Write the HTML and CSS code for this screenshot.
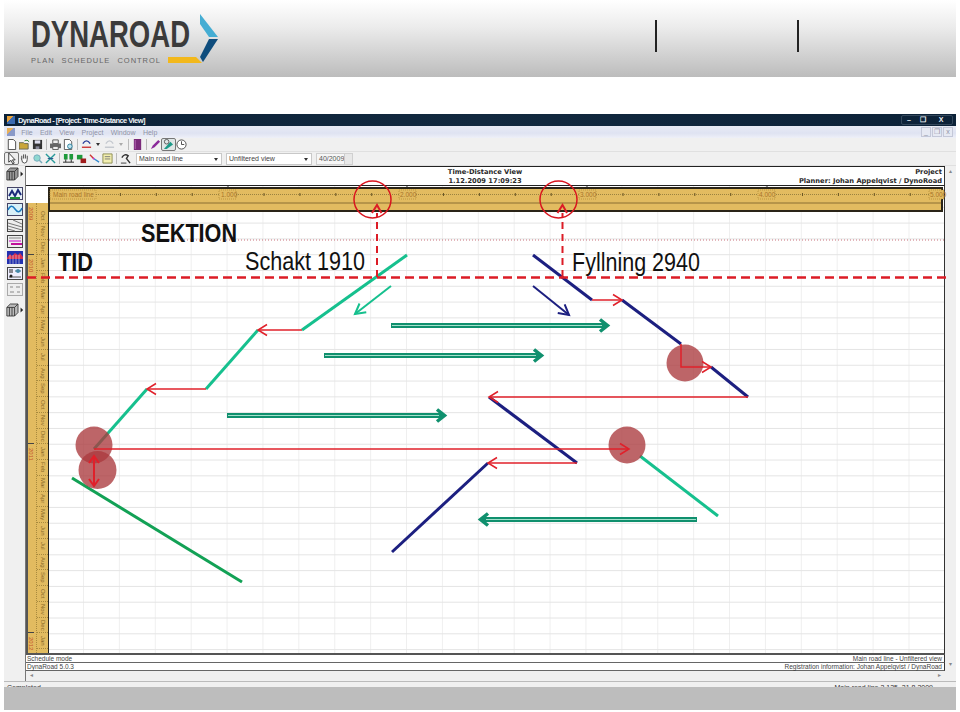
FILE: index.html
```html
<!DOCTYPE html>
<html lang="en">
<head>
  <meta charset="UTF-8">
  <meta name="viewport" content="width=device-width, initial-scale=1.0">
  <title>DynaRoad</title>
  <link rel="stylesheet" href="styles.css">
</head>
<body>

  <header class="banner">
    <svg class="logo" width="216" height="56" viewBox="0 0 216 56">
      <text class="logo-name" x="0" y="34" textLength="159" lengthAdjust="spacingAndGlyphs">DYNAROAD</text>
      <text class="logo-tag" x="0" y="50" textLength="129">PLAN SCHEDULE CONTROL</text>
      <path d="M137 44H165L171 50H137Z" fill="#f2b81c"/>
      <path d="M169 1L187 24H178L169 11Z" fill="#45add3"/>
      <path d="M178 26H187L172 49L169 44Z" fill="#0f4d7d"/>
    </svg>
    <div class="banner-links">
      <span class="banner-sep"></span>
      <span class="banner-sep"></span>
    </div>
  </header>

  <section class="app">
    <div class="titlebar">
      <span class="app-icon"></span>
      <span>DynaRoad - [Project: Time-Distance View]</span>
      <div class="win-buttons">
        <span>&#8211;</span><span>&#10064;</span><span class="win-close">X</span>
      </div>
    </div>

    <div class="menubar">
      <span class="app-icon small"></span>
      <span>File</span><span>Edit</span><span>View</span><span>Project</span><span>Window</span><span>Help</span>
      <div class="mdi-buttons">
        <span>_</span><span>&#10064;</span><span>x</span>
      </div>
    </div>

    <div class="toolbar">
      <svg class="tb" viewBox="0 0 12 12"><path d="M2.5 .5H8L10.5 3V11.5H2.5Z" fill="#fff" stroke="#444"/></svg>
      <svg class="tb" viewBox="0 0 12 12"><path d="M0 4H5L6 5H10V11H0Z" fill="#c9a63a" stroke="#665"/><path d="M6 2Q9 0 11 3" fill="none" stroke="#2a7a2a"/></svg>
      <svg class="tb" viewBox="0 0 12 12"><path d="M1 1H11V11H1Z" fill="#333"/><path d="M3 1.5H9V5H3Z" fill="#dde"/><path d="M4 8H8V11H4Z" fill="#889"/></svg>
      <span class="tb-sep"></span>
      <svg class="tb" viewBox="0 0 12 12"><path d="M3 1H9V5H3Z" fill="#eee" stroke="#555"/><path d="M0 5H12V10H0Z" fill="#666"/><path d="M3 8H9V11.5H3Z" fill="#eee" stroke="#555"/></svg>
      <svg class="tb" viewBox="0 0 12 12"><path d="M1.500 .5H7L9.500 3V11.500H1.500Z" fill="#fff" stroke="#555"/><circle cx="7.500" cy="8" r="2.500" fill="#bfe3ef" stroke="#2a7f9a"/></svg>
      <span class="tb-sep"></span>
      <svg class="tb" viewBox="0 0 12 12"><path d="M2 5Q6 -1 10 5" fill="none" stroke="#2b3e9a" stroke-width="1.500"/><path d="M1 9H11" stroke="#c33" stroke-width="1.500"/></svg>
      <span class="tb-drop"></span>
      <svg class="tb" viewBox="0 0 12 12"><path d="M2 5Q6 -1 10 5M1 9H11" fill="none" stroke="#c5c9cf" stroke-width="1.500"/></svg>
      <span class="tb-drop off"></span>
      <span class="tb-sep"></span>
      <svg class="tb" viewBox="0 0 12 12"><path d="M2 0H10V12H2Z" fill="#7a2a7a"/><path d="M3 1H4V11H3Z" fill="#b56ab5"/></svg>
      <span class="tb-sep"></span>
      <svg class="tb" viewBox="0 0 12 12"><path d="M1 11L3 7L9 1L11 3L5 9Z" fill="#8a2a9a"/></svg>
      <span class="tb-active"><svg class="tb" viewBox="0 0 12 12"><path d="M1 11L8 3L11 6L4 11Z" fill="#1c9a88"/><circle cx="4" cy="3" r="2.500" fill="none" stroke="#555"/></svg></span>
      <svg class="tb" viewBox="0 0 12 12"><circle cx="6" cy="6" r="5" fill="#fff" stroke="#444"/><path d="M6 2.500V6H9" fill="none" stroke="#444"/></svg>
    </div>

    <div class="toolbar second">
      <span class="tb-active plain"><svg class="tb" viewBox="0 0 12 12"><path d="M3 0V10L5.500 8L7.500 12L9 11L7 7.500H10Z" fill="#fff" stroke="#333"/></svg></span>
      <svg class="tb" viewBox="0 0 12 12"><path d="M3 7V3M5 6V1.500M7 6V1.500M9 7V3M3 7L2 6M3 7Q3 11 6 11Q9 11 9 7" fill="#fff" stroke="#444"/></svg>
      <svg class="tb" viewBox="0 0 12 12"><circle cx="5.500" cy="5.500" r="3.500" fill="#8fd8d0" stroke="#7ab"/><path d="M8 8L11 11" stroke="#7ab" stroke-width="1.500"/></svg>
      <svg class="tb" viewBox="0 0 12 12"><path d="M1 1L11 11M11 1L1 11" stroke="#2a9a9a" stroke-width="1.500"/><path d="M3 6H9" stroke="#26488a"/></svg>
      <span class="tb-sep"></span>
      <svg class="tb" viewBox="0 0 12 12"><path d="M1 1H5V7H1ZM7 1H11V7H7Z" fill="#1e9a3a"/><path d="M0 10H12M3 7V10M9 7V10" stroke="#222"/></svg>
      <svg class="tb" viewBox="0 0 12 12"><path d="M1 2H7V7H1Z" fill="#1e9a3a"/><path d="M5 6H11V11H5Z" fill="#a01c1c"/></svg>
      <svg class="tb" viewBox="0 0 12 12"><path d="M1 2L5 6" stroke="#c33" stroke-width="1.500"/><path d="M5 6L11 10" stroke="#38c" stroke-width="1.500"/><circle cx="5" cy="6" r="1" fill="#c3c"/></svg>
      <svg class="tb" viewBox="0 0 12 12"><path d="M1 1H11V11H1Z" fill="#f3efb0" stroke="#8a8a50"/><path d="M3 4H9M3 6.500H9" stroke="#777"/></svg>
      <span class="tb-sep"></span>
      <svg class="tb" viewBox="0 0 12 12"><path d="M2 5Q5 0 9 3L7 6L11 11" fill="none" stroke="#333" stroke-width="1.500"/><path d="M1 11H7" stroke="#333"/></svg>
      <div class="combo">Main road line<span class="combo-arrow"></span></div>
      <div class="combo">Unfiltered view<span class="combo-arrow"></span></div>
      <div class="spinner">40/2009<span class="spin-btn"></span></div>
    </div>

    <div class="workspace">
      <aside class="sidebar">
        <svg class="side-icon cube" viewBox="0 0 21 16"><path d="M1 5L5 1H14V11L10 15H1Z" fill="#999" stroke="#333"/><path d="M1 5H10V15M10 5L14 1M4 5V15M7 5V15" fill="none" stroke="#333"/><path d="M17 5L20 8L17 11Z" fill="#222"/></svg>
        <svg class="side-icon" viewBox="0 0 16 13"><rect x=".5" y=".5" width="15" height="12" fill="#e8f2f8" stroke="#446"/><path d="M2 9L5 4L8 9L11 3L14 8" fill="none" stroke="#1a2a7a" stroke-width="2"/><path d="M3 11H13" stroke="#1a8a3a" stroke-width="2"/></svg>
        <svg class="side-icon" viewBox="0 0 16 13"><rect x=".5" y=".5" width="15" height="12" fill="#d8f0f8" stroke="#446"/><path d="M1 7Q4 0 8 6T15 5" fill="none" stroke="#1a7ac0" stroke-width="1.500"/></svg>
        <svg class="side-icon" viewBox="0 0 16 13"><rect x=".5" y=".5" width="15" height="12" fill="#eee" stroke="#444"/><path d="M1 4L15 8M1 7L15 11M1 10L8 12M6 1L15 5" stroke="#777"/></svg>
        <svg class="side-icon" viewBox="0 0 16 13"><rect x=".5" y=".5" width="15" height="12" fill="#eee" stroke="#444"/><path d="M2 3H14" stroke="#888"/><path d="M2 6H14" stroke="#c0c"/><path d="M4 9H15" stroke="#c0109a" stroke-width="2"/></svg>
        <svg class="side-icon" viewBox="0 0 16 13"><rect width="16" height="13" fill="#2230b0"/><path d="M0 7L3 3L5 5L8 2L11 4L13 2L16 6V8H0Z" fill="#d83050"/><path d="M3 4V13M6 4V13M9 4V13M12 4V13" stroke="#ddd" stroke-width=".6"/></svg>
        <svg class="side-icon" viewBox="0 0 16 13"><rect x=".5" y=".5" width="15" height="12" fill="#eef" stroke="#444"/><path d="M3 2V6M5 2V6" stroke="#222"/><path d="M8 4H14" stroke="#267"/><circle cx="11" cy="4" r="2" fill="#48a"/><path d="M2 10H14" stroke="#555"/><circle cx="4" cy="9" r="1.500" fill="#222"/></svg>
        <svg class="side-icon" viewBox="0 0 16 13"><rect x=".5" y=".5" width="15" height="12" fill="#eee" stroke="#aaa"/><path d="M3 3H6V5H3ZM9 3H13V5H9ZM3 8H7V10H3ZM10 8H13V10H10Z" fill="#bbb"/></svg>
        <svg class="side-icon cube last" viewBox="0 0 21 16"><path d="M1 5L5 1H14V11L10 15H1Z" fill="#bbb" stroke="#333"/><path d="M1 5H10V15M10 5L14 1M4 5V15M7 5V15" fill="none" stroke="#333"/><path d="M17 5L20 8L17 11Z" fill="#222"/></svg>
      </aside>

      <div class="view">
        <div class="view-head">
          <div class="view-title">Time-Distance View<br>1.12.2009 17:09:23</div>
          <div class="view-project">Project<br>Planner: Johan Appelqvist / DynoRoad</div>
        </div>

        <div class="chart">
          <div class="left-ruler">
            <div class="years">
              <span class="y-part">2009</span>
              <span class="y-full">2010</span>
              <span class="y-full">2011</span>
              <span class="y-last">2012</span>
            </div>
            <div class="months">
              <span>Oct</span><span>Nov</span><span>Dec</span>
              <span>Jan</span><span>Feb</span><span>Mar</span><span>Apr</span><span>May</span><span>Jun</span>
              <span>Jul</span><span>Aug</span><span>Sep</span><span>Oct</span><span>Nov</span><span>Dec</span>
              <span>Jan</span><span>Feb</span><span>Mar</span><span>Apr</span><span>May</span><span>Jun</span>
              <span>Jul</span><span>Aug</span><span>Sep</span><span>Oct</span><span>Nov</span><span>Dec</span>
              <span>Jan</span>
            </div>
          </div>
          <div class="grid"></div>
        </div>

        <div class="status-row"><span>Schedule mode</span><span>Main road line - Unfiltered view</span></div>
        <div class="status-row"><span>DynaRoad 5.0.3</span><span>Registration information: Johan Appelqvist / DynaRoad</span></div>
        <div class="hscroll"><span>&#9666;</span><span>&#9656;</span></div>
      </div>

      <div class="vscroll"><span>&#9652;</span><span>&#9662;</span></div>
    </div>

    <div class="statusbar"><span>Completed</span><span>Main road line 2.125, 31.8.2009</span></div>

    <!-- page coordinates, the diagram is drawn on top of the chart -->
    <svg class="overlay" width="952" height="573" viewBox="4 114 952 573">
      <defs>
        <marker id="redHead" markerUnits="userSpaceOnUse" markerWidth="14" markerHeight="14" refX="11" refY="7" orient="auto">
          <path d="M2 1.500L11 7L2 12.500" fill="none" stroke="#e0202a" stroke-width="1.500"/>
        </marker>
        <marker id="tealHead" markerUnits="userSpaceOnUse" markerWidth="16" markerHeight="16" refX="12" refY="8" orient="auto">
          <path d="M2 2.500L12 8L2 13.500" fill="none" stroke="#16c08e" stroke-width="2"/>
        </marker>
        <marker id="blueHead" markerUnits="userSpaceOnUse" markerWidth="16" markerHeight="16" refX="12" refY="8" orient="auto">
          <path d="M2 2.500L12 8L2 13.500" fill="none" stroke="#1c1f80" stroke-width="2"/>
        </marker>
      </defs>

      <!-- top ruler -->
      <path class="ruler-tick" d="M228 186V188M407 186V188M587 186V188M767 186V188"/>
      <rect class="band" x="49" y="188" width="893" height="23"/>
      <line class="band-dots" x1="50" y1="194.500" x2="941" y2="194.500"/>
      <line class="band-ticks" x1="84" y1="194.500" x2="941" y2="194.500"/>
      <line class="band-line" x1="50" y1="203" x2="941" y2="203"/>
      <rect class="band-box" x="50" y="190" width="46" height="9"/>
      <text class="band-text" x="53" y="197">Main road line</text>
      <rect class="band-box" x="219" y="190" width="17" height="9"/>
      <text class="band-text" x="221" y="197">1.000</text>
      <rect class="band-box" x="399" y="190" width="17" height="9"/>
      <text class="band-text" x="400" y="197">2.000</text>
      <rect class="band-box" x="579" y="190" width="17" height="9"/>
      <text class="band-text" x="580" y="197">3.000</text>
      <rect class="band-box" x="758" y="190" width="17" height="9"/>
      <text class="band-text" x="759" y="197">4.000</text>
      <rect class="band-box" x="929" y="190" width="15" height="9"/>
      <text class="band-text" x="930" y="197">5.000</text>

      <line class="dotted" x1="49" y1="240" x2="945" y2="240"/>

      <!-- tasks -->
      <g class="task teal">
        <line x1="407" y1="255" x2="302" y2="330"/>
        <line x1="258" y1="330" x2="206" y2="389"/>
        <line x1="147" y1="389" x2="94" y2="449"/>
        <line x1="640" y1="456" x2="718" y2="516"/>
      </g>
      <g class="task blue">
        <line x1="533" y1="255" x2="592" y2="300"/>
        <line x1="622" y1="300" x2="681" y2="344"/>
        <line x1="711" y1="367" x2="748" y2="397"/>
        <line x1="489" y1="397" x2="577" y2="463"/>
        <line x1="488" y1="463" x2="392" y2="552"/>
      </g>
      <line class="task green" x1="72" y1="478" x2="242" y2="582"/>

      <line class="thin teal-thin" x1="391" y1="286" x2="355" y2="314" marker-end="url(#tealHead)"/>
      <line class="thin blue-thin" x1="533" y1="286" x2="569" y2="315" marker-end="url(#blueHead)"/>

      <!-- double arrows -->
      <g class="haul">
        <path d="M391 325.500H606"/><path d="M324 355.500H540"/><path d="M227 415.500H443"/><path d="M697 519.500H482"/>
      </g>
      <g class="haul-core">
        <path d="M392 325.500H602"/><path d="M325 355.500H536"/><path d="M228 415.500H439"/><path d="M696 519.500H486"/>
      </g>
      <g class="haul-head">
        <path d="M600 319.500L607.500 325.500L600 331.500"/>
        <path d="M534 349.500L541.500 355.500L534 361.500"/>
        <path d="M437 409.500L444.500 415.500L437 421.500"/>
        <path d="M488 513.500L480.500 519.500L488 525.500"/>
      </g>

      <!-- links -->
      <g class="link">
        <line x1="302" y1="330" x2="258" y2="330" marker-end="url(#redHead)"/>
        <line x1="206" y1="389" x2="147" y2="389" marker-end="url(#redHead)"/>
        <line x1="592" y1="300" x2="622" y2="300" marker-end="url(#redHead)"/>
        <line x1="748" y1="397" x2="489" y2="397" marker-end="url(#redHead)"/>
        <line x1="577" y1="463" x2="488" y2="463" marker-end="url(#redHead)"/>
      </g>

      <circle class="mark" cx="94" cy="445" r="18.500"/>
      <circle class="mark" cx="97.500" cy="470" r="19"/>
      <circle class="mark" cx="627" cy="445" r="18.500"/>
      <circle class="mark" cx="685" cy="363" r="18.500"/>

      <g class="link">
        <line x1="94" y1="449" x2="629" y2="449" marker-end="url(#redHead)"/>
        <polyline points="681,344 681,367 711,367" marker-end="url(#redHead)"/>
      </g>
      <path class="link-bold" d="M94 457V485M89 463L94 456L99 463M89 479L94 486L99 479"/>

      <!-- section markers -->
      <circle class="ring" cx="372.500" cy="199.500" r="18.500"/>
      <circle class="ring" cx="558.500" cy="199.500" r="18.500"/>
      <line class="dash-h" x1="27" y1="277.500" x2="951" y2="277.500"/>
      <line class="dash-v" x1="377" y1="277" x2="377" y2="213"/>
      <line class="dash-v" x1="562.500" y1="277" x2="562.500" y2="213"/>
      <path class="dash-head" d="M372 213L377 205L381.500 213"/>
      <path class="dash-head" d="M557.500 213L562.500 205L567 213"/>

      <text class="note bold" x="141" y="242" textLength="96" lengthAdjust="spacingAndGlyphs">SEKTION</text>
      <text class="note bold" x="58" y="271" textLength="35" lengthAdjust="spacingAndGlyphs">TID</text>
      <text class="note" x="245" y="270" textLength="120" lengthAdjust="spacingAndGlyphs">Schakt 1910</text>
      <text class="note" x="572" y="271" textLength="128" lengthAdjust="spacingAndGlyphs">Fyllning 2940</text>
    </svg>
  </section>

  <div class="bottom-band"></div>

</body>
</html>
```

FILE: styles.css
```css
* {
  box-sizing: border-box;
}
body {
  margin: 0;
  width: 960px;
  height: 712px;
  overflow: hidden;
  background-color: #fff;
  font-family: "Liberation Sans", Arial, sans-serif;
}

/* banner */
.banner {
  display: flex;
  align-items: flex-start;
  margin: 0 4px;
  height: 77px;
  padding: 13px 0 0 27px;
  background: linear-gradient(#fff 0%, #ececec 35%, #bcbcbc 100%);
}
.logo {
  display: block;
}
.logo-name {
  font-family: "Liberation Sans Narrow", "Liberation Sans", sans-serif;
  font-weight: 700;
  font-size: 37px;
  fill: #3b3b3b;
}
.logo-tag {
  font-size: 7.500px;
  word-spacing: 4px;
  fill: #666;
}
.banner-links {
  display: flex;
  gap: 140px;
  margin: 7px 0 0 408px;
}
.banner-sep {
  width: 2px;
  height: 32px;
  background-color: #222;
}

/* application window */
.app {
  position: relative;
  width: 952px;
  height: 573px;
  margin: 37px 4px 0;
  background-color: #f0f0f0;
  font-size: 7px;
  color: #333;
}
.overlay {
  position: absolute;
  left: 0;
  top: 0;
  pointer-events: none;
}
.titlebar {
  display: flex;
  align-items: center;
  gap: 3px;
  height: 12px;
  padding-left: 3px;
  background: linear-gradient(90deg, #0c2238, #12293f 50%, #0c2238);
  color: #eef2f6;
  font-size: 7.500px;
  font-weight: 700;
  letter-spacing: -.550px;
}
.app-icon {
  width: 8px;
  height: 8px;
  background: linear-gradient(135deg, #e8a23a 40%, #3a6ab0 40%);
}
.app-icon.small {
  margin: 0 -1px 0 3px;
  background: linear-gradient(135deg, #e8b05a 40%, #8a9ac8 40%);
}
.win-buttons {
  display: flex;
  margin-left: auto;
  margin-right: 3px;
  height: 10px;
  border: 1px solid #34485c;
  border-radius: 2px;
  font-size: 7px;
  line-height: 8px;
  letter-spacing: 0;
  text-align: center;
}
.win-buttons span {
  width: 14px;
}
.win-buttons .win-close {
  width: 22px;
}
.menubar {
  display: flex;
  align-items: center;
  gap: 7.300px;
  height: 12px;
  background: linear-gradient(#e8ebf5, #dfe3f2 60%, #eef0f8);
  color: #8f93a6;
  font-size: 7px;
}
.mdi-buttons {
  display: flex;
  gap: 1px;
  margin-left: auto;
  margin-right: 3px;
}
.mdi-buttons span {
  width: 10px;
  height: 10px;
  border: 1px solid #c4c8d8;
  background-color: #e6e9f3;
  line-height: 7px;
  text-align: center;
}
.toolbar {
  display: flex;
  align-items: center;
  height: 14px;
  padding-left: 1px;
  border-bottom: 1px solid #e0e0e0;
}
.tb {
  display: block;
  flex: none;
  width: 11px;
  height: 11px;
  margin: 0 1px;
}
.tb-sep {
  flex: none;
  width: 1px;
  height: 11px;
  margin: 0 2px;
  background-color: #bbb;
}
.tb-drop {
  flex: none;
  width: 0;
  height: 0;
  margin: 0 3px;
  border-left: 2.500px solid transparent;
  border-right: 2.500px solid transparent;
  border-top: 3px solid #333;
}
.tb-drop.off {
  border-top-color: #aaa;
}
.tb-active {
  display: block;
  margin: 0 -1px;
  border: 1px solid #777;
  border-radius: 2px;
  background-color: #dfe6e6;
}
.tb-active.plain {
  background-color: #eee;
}
.combo {
  position: relative;
  flex: none;
  width: 86px;
  height: 12px;
  margin-left: 4px;
  padding-left: 2px;
  border: 1px solid #c8c8c8;
  background-color: #fff;
  line-height: 10px;
  color: #444;
}
.combo-arrow {
  position: absolute;
  right: 3px;
  top: 4px;
  width: 0;
  height: 0;
  border-left: 2.500px solid transparent;
  border-right: 2.500px solid transparent;
  border-top: 3px solid #333;
}
.spinner {
  position: relative;
  flex: none;
  width: 37px;
  height: 12px;
  margin-left: 4px;
  padding-left: 2px;
  border: 1px solid #d0d0d0;
  background-color: #f6f6f6;
  line-height: 10px;
  color: #555;
}
.spin-btn {
  position: absolute;
  right: 0;
  top: 0;
  width: 8px;
  height: 10px;
  border-left: 1px solid #ccc;
  background-color: #e8e8e8;
}

.workspace {
  display: flex;
  height: 515px;
}
.sidebar {
  display: flex;
  flex-direction: column;
  align-items: center;
  flex: none;
  width: 21px;
  padding-top: 1px;
  gap: 3px;
}
.side-icon {
  display: block;
  flex: none;
  width: 16px;
  height: 13px;
}
.side-icon.cube {
  width: 18px;
  height: 14px;
  margin-bottom: 3px;
}
.side-icon.last {
  margin-top: 3.500px;
}
.view {
  display: flex;
  flex-direction: column;
  flex: none;
  width: 920px;
  border-top: 1px solid #222;
  border-left: 1px solid #777;
  background-color: #fff;
}
.view-head {
  position: relative;
  flex: none;
  height: 19px;
  padding-top: 1px;
  border-right: 1px solid #333;
  border-bottom: 1px solid #222;
  font-family: "DejaVu Sans", sans-serif;
  font-size: 6.700px;
  font-weight: 700;
  line-height: 9px;
  color: #2a2a2a;
}
.view-title {
  text-align: center;
}
.view-project {
  position: absolute;
  right: 2px;
  top: 1px;
  text-align: right;
}
.chart {
  display: flex;
  flex: none;
  height: 469px;
  overflow: hidden;
  border-right: 1px solid #333;
  border-bottom: 2px solid #555;
}
.left-ruler {
  display: flex;
  flex: none;
  width: 23px;
  margin-top: 17px;
  border-left: 2px solid #555;
  border-right: 1.500px solid #222;
  background-color: #e2bb60;
  font-size: 6px;
  color: #8a6a28;
}
.years {
  flex: none;
  width: 9px;
  border-right: 1px dotted #a88a3e;
  color: #c2552a;
}
.years span {
  display: block;
  padding-top: 4px;
  border-bottom: 1px solid #444;
  writing-mode: vertical-rl;
}
.y-part {
  height: 52px;
}
.y-full {
  height: 189px;
}
.years .y-last {
  border-bottom: none;
}
.months {
  display: flex;
  flex-direction: column;
  padding-top: 5px;
  flex: 1;
}
.months span {
  flex: none;
  height: 15.750px;
  border-bottom: 1px dotted #a88a3e;
  writing-mode: vertical-rl;
  line-height: 10px;
  text-align: center;
}
.grid {
  flex: 1;
  background-image:
    linear-gradient(#e4e4e4 1px, transparent 1px),
    linear-gradient(90deg, #efefef 1px, transparent 1px);
  background-size: 35.900px 15.800px;
  background-position: 34px 5px;
}
.status-row {
  display: flex;
  justify-content: space-between;
  flex: none;
  height: 8px;
  padding: 0 2px 0 1px;
  border-right: 1px solid #333;
  border-bottom: 1px solid #666;
  font-size: 6.500px;
  line-height: 8px;
  color: #444;
}
.status-row + .status-row {
  height: 7.500px;
}
.hscroll {
  display: flex;
  justify-content: space-between;
  flex: 1;
  padding: 0 4px;
  background-color: #f0f0f0;
  font-size: 6px;
  line-height: 9px;
  color: #888;
}
.vscroll {
  display: flex;
  flex-direction: column;
  justify-content: space-between;
  flex: 1;
  padding: 0 0 12px;
  font-size: 6px;
  line-height: 10px;
  text-align: center;
  color: #888;
}
.statusbar {
  display: flex;
  justify-content: space-between;
  height: 6px;
  padding: 1px 23px 0 3px;
  overflow: hidden;
  border-top: 1px solid #bbb;
  font-size: 7px;
  line-height: 9px;
}
.bottom-band {
  height: 23px;
  margin: 0 4px;
  background-color: #bdbdbd;
}

/* chart overlay */
.ruler-tick {
  stroke: #333;
  fill: none;
}
.band {
  fill: #e2bb60;
  stroke: #2a2418;
  stroke-width: 2;
}
.band-dots {
  stroke: #9a8240;
  stroke-dasharray: 1 1;
}
.band-ticks {
  stroke: #6a5624;
  stroke-width: 3;
  stroke-dasharray: 1 34.900;
}
.band-line {
  stroke: #8a6f32;
}
.band-box {
  fill: #e2bb60;
  stroke: #b08a34;
  stroke-width: .7;
  stroke-dasharray: 1 1;
}
.band-text {
  font-size: 6.500px;
  fill: #a8742a;
}
.dotted {
  stroke: #c8707a;
  stroke-dasharray: 1 2;
}
.task {
  stroke-width: 3;
  fill: none;
}
.task.teal {
  stroke: #16c08e;
}
.task.blue {
  stroke: #1c1f80;
}
.task.green {
  stroke: #12a155;
}
.thin {
  stroke-width: 2;
}
.teal-thin {
  stroke: #16c08e;
}
.blue-thin {
  stroke: #1c1f80;
}
.haul path {
  fill: none;
  stroke: #10906e;
  stroke-width: 5;
}
.haul-core path {
  fill: none;
  stroke: #a4e0cc;
  stroke-width: 1;
}
.haul-head path {
  fill: none;
  stroke: #10906e;
  stroke-width: 3.500;
}
.link {
  fill: none;
  stroke: #e0202a;
  stroke-width: 1.500;
}
.link-bold {
  fill: none;
  stroke: #e0202a;
  stroke-width: 2;
}
.mark {
  fill: #aa3a3e;
  fill-opacity: .78;
}
.ring {
  fill: none;
  stroke: #d8141e;
  stroke-width: 1.500;
}
.dash-h {
  stroke: #dc1c26;
  stroke-width: 2.500;
  stroke-dasharray: 9 5;
}
.dash-v {
  stroke: #dc1c26;
  stroke-width: 2;
  stroke-dasharray: 7 5;
}
.dash-head {
  fill: none;
  stroke: #dc1c26;
  stroke-width: 2;
}
.note {
  font-family: "Liberation Sans Narrow", "Liberation Sans", sans-serif;
  font-size: 25px;
  fill: #111;
}
.note.bold {
  font-weight: 700;
}
```
